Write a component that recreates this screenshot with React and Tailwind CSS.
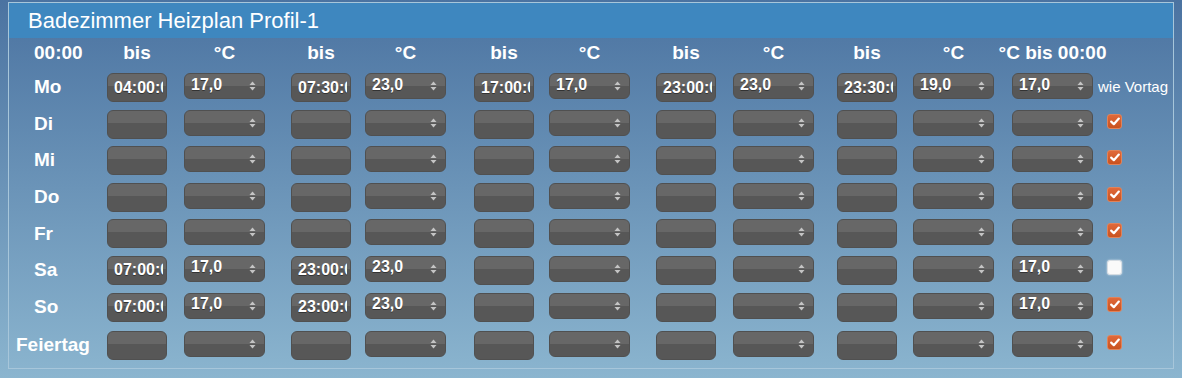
import React from 'react';

const days = [
  { name: 'Mo', vals: ['04:00:00', '17,0', '07:30:00', '23,0', '17:00:00', '17,0', '23:00:00', '23,0', '23:30:00', '19,0', '17,0'], first: true },
  { name: 'Di', vals: [], checked: true },
  { name: 'Mi', vals: [], checked: true },
  { name: 'Do', vals: [], checked: true },
  { name: 'Fr', vals: [], checked: true },
  { name: 'Sa', vals: ['07:00:00', '17,0', '23:00:00', '23,0', '', '', '', '', '', '', '17,0'], checked: false },
  { name: 'So', vals: ['07:00:00', '17,0', '23:00:00', '23,0', '', '', '', '', '', '', '17,0'], checked: true },
  { name: 'Feiertag', vals: [], checked: true, holiday: true },
];

const headers = ['bis', '°C', 'bis', '°C', 'bis', '°C', 'bis', '°C', 'bis', '°C', '°C bis 00:00'];
const kinds = ['t', 's', 't', 's', 't', 's', 't', 's', 't', 's', 's'];

const gridCols = 'grid grid-cols-[98px_77px_107px_74px_109px_75px_107px_77px_104px_76px_99px_87px_1fr]';

// time field: the value is wider than the box and gets cut, same as the original
const TimeInput = ({ value }) => (
  <div className="w-[60px] h-[29px] rounded-[6px] border border-[#505050] bg-[linear-gradient(#676767_46%,#575757_46%)] overflow-hidden pl-[6px] pr-[3px] flex items-center">
    <span className="text-[16px] font-bold text-white whitespace-nowrap overflow-hidden [text-shadow:0_1px_0_#333]">{value}</span>
  </div>
);

const Arrows = () => (
  <svg width="7" height="10" viewBox="0 0 7 10" className="shrink-0">
    <path d="M3.5 0.5 L6.5 4 L0.5 4 Z" fill="#c4c4c4" />
    <path d="M3.5 9.5 L6.5 6 L0.5 6 Z" fill="#c4c4c4" />
  </svg>
);

const SelectInput = ({ value }) => (
  <div className="w-[81px] h-[26px] rounded-[6px] border border-[#505050] bg-[linear-gradient(#676767_50%,#575757_50%)] pl-[6px] pr-[8px] flex items-center justify-between">
    <span className="text-[16px] font-bold text-white leading-none -mt-[3px] [text-shadow:0_1px_0_#333]">{value}</span>
    <Arrows />
  </div>
);

const Check = ({ checked }) =>
  checked ? (
    <div className="w-[15px] h-[15px] rounded-[3px] border border-[#e0835a] bg-[linear-gradient(#e0693a,#c9521f)] flex items-center justify-center">
      <svg width="10" height="9" viewBox="0 0 10 9">
        <path d="M1.2 4.6 L3.8 7.2 L8.8 1.6" stroke="#fff" strokeWidth="2.2" fill="none" strokeLinecap="round" strokeLinejoin="round" />
      </svg>
    </div>
  ) : (
    <div className="w-[15px] h-[15px] rounded-[3px] bg-[#fafafa] border border-[#d6dde3] shadow-[0_0_2px_rgba(255,255,255,0.8)]" />
  );

const App = () => {
  return (
    <div className="w-full h-[378px] bg-[linear-gradient(#4b73a1,#8bb5cf)] pt-[2px] px-[8px] font-['Liberation_Sans',Arial,sans-serif] text-white">
      <div className="h-[367px] border border-[#a7c6da]">
        <div className="h-[35px] bg-[#3e87bf] pl-[19px] flex items-center text-[22px] leading-none">
          Badezimmer Heizplan Profil-1
        </div>

        <div className={`${gridCols} h-[30px] items-center font-bold text-[19px]`}>
          <div className="pl-[25px]">00:00</div>
          {headers.map((h, i) => (
            <div key={i} className={`${kinds[i] === 't' ? 'w-[60px]' : 'w-[81px]'} flex justify-center whitespace-nowrap`}>
              {h}
            </div>
          ))}
          <div />
        </div>

        {days.map((d) => (
          <div key={d.name} className={`${gridCols} items-start ${d.holiday ? 'h-[38px] pt-[7px]' : 'h-[36.6px] pt-[5px]'}`}>
            <div className={`h-[29px] flex items-center font-bold text-[19px] ${d.holiday ? 'pl-[7px]' : 'pl-[25px]'}`}>
              {d.name}
            </div>
            {kinds.map((k, i) => (
              <div key={i}>
                {k === 't' ? <TimeInput value={d.vals[i] || ''} /> : <SelectInput value={d.vals[i] || ''} />}
              </div>
            ))}
            <div className="h-[29px] flex items-center">
              {d.first ? (
                <span className="text-[15px] whitespace-nowrap -ml-[1px]">wie Vortag</span>
              ) : (
                <div className="pl-[8px] -mt-[6px]">
                  <Check checked={d.checked} />
                </div>
              )}
            </div>
          </div>
        ))}
      </div>
    </div>
  );
};

export default App;
